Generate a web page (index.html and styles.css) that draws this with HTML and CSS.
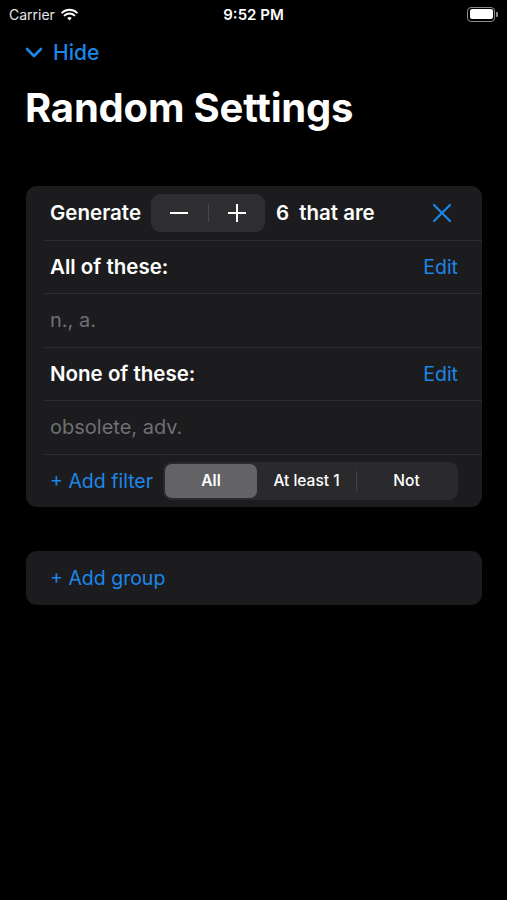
FILE: index.html
```html
<!DOCTYPE html>
<html lang="en">
<head>
    <meta charset="UTF-8">
    <meta name="viewport" content="width=device-width, initial-scale=1.0">
    <title>Random Settings</title>
    <link rel="stylesheet" href="styles.css">
</head>
<body>
    <div class="status">
        <div class="carrier">
            Carrier
            <svg class="wifi" width="17" height="13" viewBox="0 0 17 13">
                <path d="M8.5 12.5 L6.2 10 A3.3 3.3 0 0 1 10.8 10 Z" fill="#fff"/>
                <path d="M3.6 7.4 A7 7 0 0 1 13.4 7.4" stroke="#fff" stroke-width="2" fill="none" stroke-linecap="round"/>
                <path d="M1.2 4.6 A10.5 10.5 0 0 1 15.8 4.6" stroke="#fff" stroke-width="2" fill="none" stroke-linecap="round"/>
            </svg>
        </div>
        <div class="time">9:52 PM</div>
        <div class="battery">
            <div class="battery-body"><div class="battery-fill"></div></div>
            <div class="battery-nub"></div>
        </div>
    </div>

    <div class="nav">
        <svg width="18" height="11" viewBox="0 0 18 11">
            <path d="M2 2 L9 9 L16 2" stroke="#1d86e8" stroke-width="2.6" fill="none" stroke-linecap="round" stroke-linejoin="round"/>
        </svg>
        <span>Hide</span>
    </div>

    <h1 class="title">Random Settings</h1>

    <div class="card">
        <div class="row">
            <span class="label">Generate</span>
            <div class="stepper">
                <div class="step">
                    <svg width="20" height="20" viewBox="0 0 20 20"><path d="M1 10 H19" stroke="#fff" stroke-width="2"/></svg>
                </div>
                <div class="step-divider"></div>
                <div class="step">
                    <svg width="20" height="20" viewBox="0 0 20 20"><path d="M1 10 H19 M10 1 V19" stroke="#fff" stroke-width="2"/></svg>
                </div>
            </div>
            <span class="label count">6</span>
            <span class="label">that are</span>
            <svg class="close" width="20" height="20" viewBox="0 0 20 20">
                <path d="M2 2 L18 18 M18 2 L2 18" stroke="#1d86e8" stroke-width="2.2" stroke-linecap="round"/>
            </svg>
        </div>
        <div class="row">
            <span class="label">All of these:</span>
            <span class="link push">Edit</span>
        </div>
        <div class="row">
            <span class="muted">n., a.</span>
        </div>
        <div class="row">
            <span class="label">None of these:</span>
            <span class="link push">Edit</span>
        </div>
        <div class="row">
            <span class="muted">obsolete, adv.</span>
        </div>
        <div class="row">
            <span class="link">+ Add filter</span>
            <div class="segments">
                <div class="segment selected">All</div>
                <div class="segment">At least 1</div>
                <div class="seg-divider"></div>
                <div class="segment">Not</div>
            </div>
        </div>
    </div>

    <div class="card group">
        <div class="row">
            <span class="link">+ Add group</span>
        </div>
    </div>
</body>
</html>
```

FILE: styles.css
```css
body {
    margin: 0;
    background-color: #000;
    color: #fff;
    font-family: Inter, "Liberation Sans", sans-serif;
    width: 507px;
    height: 900px;
    overflow: hidden;
}
.status {
    height: 28px;
    display: flex;
    align-items: center;
    justify-content: space-between;
    padding: 0 9px;
    position: relative;
}
.carrier {
    display: flex;
    align-items: center;
    gap: 6px;
    font-size: 14px;
    color: #e6e6e6;
}
.time {
    position: absolute;
    left: 0;
    right: 0;
    text-align: center;
    font-size: 15px;
    font-weight: 600;
}
.battery {
    display: flex;
    align-items: center;
    gap: 1px;
}
.battery-body {
    width: 23px;
    height: 10px;
    border: 1.5px solid #8a8a8a;
    border-radius: 4px;
    padding: 1.5px;
}
.battery-fill {
    width: 100%;
    height: 100%;
    background-color: #fff;
    border-radius: 2px;
}
.battery-nub {
    width: 2px;
    height: 5px;
    background-color: #8a8a8a;
    border-radius: 0 1px 1px 0;
}
.nav {
    display: flex;
    align-items: center;
    gap: 10px;
    height: 28px;
    margin-top: 10px;
    padding-left: 25px;
    color: #1d86e8;
    font-size: 21px;
    font-weight: 500;
}
.title {
    margin: 20px 0 0 25px;
    font-size: 40px;
    line-height: 44px;
    font-weight: 700;
    letter-spacing: -0.2px;
}
.card {
    margin: 56px 25px 0 26px;
    background-color: #1c1c1e;
    border-radius: 11px;
    overflow: hidden;
}
.row {
    height: 53.5px;
    display: flex;
    align-items: center;
    padding: 0 24px 0 6px;
    box-sizing: border-box;
    border-top: 1px solid #2c2c2e;
    margin-left: 18px;
}
.row:first-child {
    border-top: none;
}
.label {
    font-size: 20.5px;
    font-weight: 600;
}
.link {
    font-size: 19.5px;
    color: #1d86e8;
}
.push {
    margin-left: auto;
}
.muted {
    font-size: 20px;
    color: #6f6f74;
}
.stepper {
    display: flex;
    align-items: center;
    width: 114px;
    height: 38px;
    margin-left: 10px;
    background-color: #2e2e31;
    border-radius: 9px;
}
.step {
    flex: 1;
    display: flex;
    justify-content: center;
    align-items: center;
}
.step-divider {
    width: 1px;
    height: 18px;
    background-color: #48484a;
}
.count {
    margin: 0 10px 0 11px;
}
.close {
    margin-left: auto;
    margin-right: 6px;
}
.segments {
    display: flex;
    align-items: center;
    width: 295px;
    height: 38px;
    margin-left: auto;
    background-color: #2a2a2d;
    border-radius: 9px;
    padding: 2px;
    box-sizing: border-box;
}
.segment {
    flex: 1;
    height: 100%;
    display: flex;
    align-items: center;
    justify-content: center;
    font-size: 15.5px;
    font-weight: 500;
    border-radius: 7px;
}
.segment.selected {
    flex: 0 0 92px;
    background-color: #636366;
    font-weight: 600;
}
.seg-divider {
    width: 1px;
    height: 20px;
    background-color: #444447;
}
.group {
    margin-top: 44px;
}
```
